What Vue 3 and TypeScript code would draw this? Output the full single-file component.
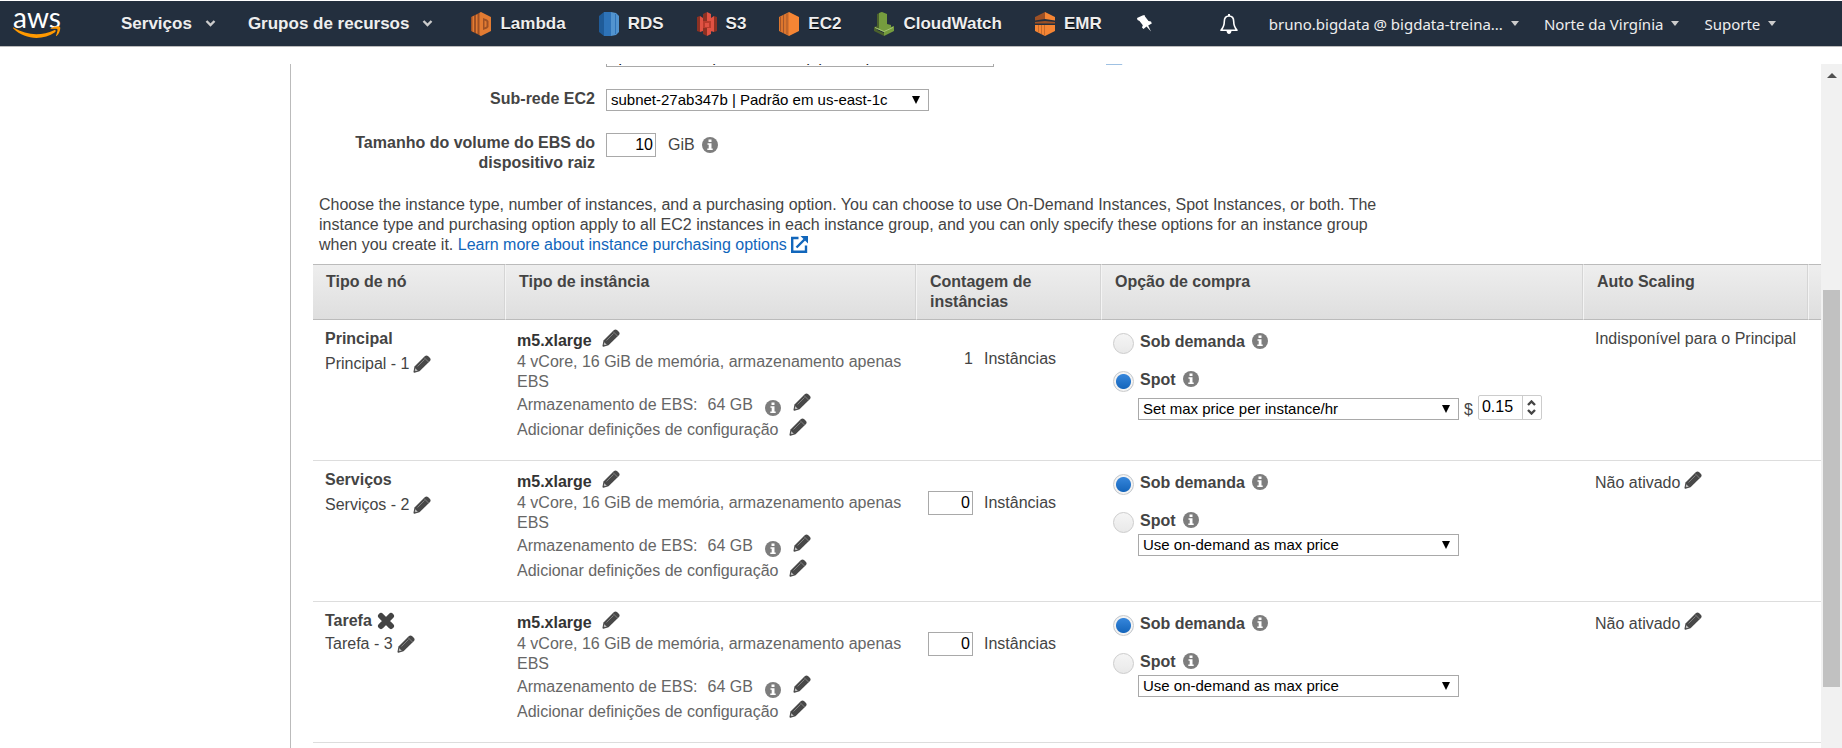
<script setup lang="ts">
import { ref } from 'vue'

interface Group {
  id: string
  name: string
  label: string
  removable: boolean
  fixedCount: boolean
  count: number
  option: 'ondemand' | 'spot'
  price: string
  scaling: string
}

const groups = ref<Group[]>([
  { id: 'master', name: 'Principal', label: 'Principal - 1', removable: false, fixedCount: true, count: 1, option: 'spot', price: 'Set max price per instance/hr', scaling: 'Indisponível para o Principal' },
  { id: 'core', name: 'Serviços', label: 'Serviços - 2', removable: false, fixedCount: false, count: 0, option: 'ondemand', price: 'Use on-demand as max price', scaling: 'Não ativado' },
  { id: 'task', name: 'Tarefa', label: 'Tarefa - 3', removable: true, fixedCount: false, count: 0, option: 'ondemand', price: 'Use on-demand as max price', scaling: 'Não ativado' },
])
const prices = ['Set max price per instance/hr', 'Use on-demand as max price']
const rootVolume = ref('10')
const maxPrice = ref('0.15')
</script>

<template>
  <div class="page">
    <svg class="defs" width="0" height="0" aria-hidden="true">
      <symbol id="pencil" viewBox="0 0 18 18">
        <path fill="#484848" d="M.5 16.500 1.500 11.500 12 1q1.500-1.200 3 0l2 2q1.200 1.500 0 3L6.500 16.300 1.500 17.700Q.3 17.800.5 16.500z" />
        <path fill="none" stroke="#888" stroke-width=".9" d="M4.500 11.500 11.500 4.500M11 2.500l4.500 4.500" />
        <path fill="#bbb" d="m2.300 13.200 2.500 2.500-2.200.6-.9-.9z" />
      </symbol>
      <symbol id="info" viewBox="0 0 16 16">
        <circle cx="8" cy="8" r="8" fill="#7d7d7d" />
        <path fill="#fff" d="M6.500 2.500h3v2.500h-3zM5.500 6.200h4v5.300h1.200V13H5.300v-1.500h1.400V7.700H5.500z" />
      </symbol>
      <symbol id="external" viewBox="0 0 17 17">
        <path fill="none" stroke="#16b" stroke-width="2.400" d="M7.500 2H1.200v13.800H15V9.500M5.500 11.500l8-8" />
        <path fill="#16b" d="M9.500 0H17v7.500z" />
      </symbol>
      <symbol id="chev" viewBox="0 0 10 7">
        <path fill="none" stroke="#ccc" stroke-width="2.400" d="m1 1 4 4 4-4" />
      </symbol>
    </svg>

    <header class="topbar">
      <a class="logo" href="#" aria-label="AWS">
        <span class="word">aws</span>
        <svg width="48" height="13" viewBox="0 0 48 13"><path fill="#f90" d="M.6 1.500C14 10 29 10 41 4.200c1.500-.6 2.500 1 1 2.100C30 14.500 12 14 .3 2.500-.2 1.900 0 1.200.6 1.500zM37.500 2.700C41 .3 46-.2 47 .9c.9 1.500-.6 6.500-3.200 8.900-.6.4-1 .1-.7-.5 1-2.500 1.800-5.300 1.200-6.100-.6-.7-4-.5-6.300-.2-.6.100-.9-.1-.5-.300z" /></svg>
      </a>
      <button class="nav services">Serviços<svg width="11" height="7"><use href="#chev" /></svg></button>
      <button class="nav groups">Grupos de recursos<svg width="11" height="7"><use href="#chev" /></svg></button>
      <nav class="shortcuts">
        <a href="#">
          <svg width="20" height="24" viewBox="0 0 20 24"><path fill="#9d5025" d="m0 5 10-5v24L0 19z" /><path fill="#e27b32" d="M1.500 4.500 3 3.700v16.600l-1.500-.8zM5 3l1.500-.8v19.600L5 21zM10 0l10 5v14l-10 5-1.500-1V1z" /><path fill="#9d5025" d="m12 6 4 1.500 1.500 1.500v6L16 16.500 12 18z" /><path fill="#e27b32" d="m13.500 8.500 2 1v5l-2 1z" /></svg>
          <span>Lambda</span>
        </a>
        <a href="#">
          <svg width="20" height="24" viewBox="0 0 20 24"><path fill="#1f5b98" d="M0 4 5 0v24l-5-4z" /><path fill="#2e73b8" d="M5 0h7v24H5z" /><path fill="#5294cf" d="m12 0 5 1 3 3v16l-3 3-5 1z" /><path stroke="#2e73b8" d="M16.500 2v20" /></svg>
          <span>RDS</span>
        </a>
        <a href="#">
          <svg width="20" height="24" viewBox="0 0 20 24"><path fill="#8c3123" d="m0 5 3-1v16l-3-1zM20 5l-3-1v16l3-1zM10 0 6 2v20l4 2z" /><path fill="#e05243" d="m10 0 4 2v20l-4 2zM3 4l3 2v13l-3 1zM17 4l-3 2v13l3 1z" /><path fill="#b83b2c" d="M6 9h8v7H6z" /><path fill="#e05243" d="M8 11h4v4H8z" /></svg>
          <span>S3</span>
        </a>
        <a href="#">
          <svg width="20" height="24" viewBox="0 0 20 24"><path fill="#dc762e" d="m0 5 10-5v24L0 19z" /><path stroke="#a5562a" d="M1.500 4.500v15M4.500 3v18M8 1.500v21" /><path fill="#f58534" d="m10 0 10 5v14l-10 5z" /></svg>
          <span>EC2</span>
        </a>
        <a href="#">
          <svg width="20" height="24" viewBox="0 0 20 24"><path fill="#4b612c" d="M3 2 8 0v16H3zM0 15l3-1v4l7 3v3L0 19z" /><path fill="#759c3e" d="m5 1 3-1 5 2v10l4 1v2l3-1v5l-10 5v-4l-7-3 2-1z" /><path fill="none" stroke="#a5c574" d="m1 15.500 9 4 9-4" /></svg>
          <span>CloudWatch</span>
        </a>
        <a href="#">
          <svg width="20" height="24" viewBox="0 0 20 24"><path fill="#9d5025" d="m10 0v7L0 8.500V5zM0 10l10-1 10 1v1.500H0z" /><path fill="#f58534" d="m10 0 10 5v3.500L10 7zM0 13h20v6l-10 5-10-5z" /><path fill="#c66a2b" d="M3 13h1v7.500H3zM6 13h1v9H6zM9 13h1v11l-1-.5z" /></svg>
          <span>EMR</span>
        </a>
      </nav>
      <button class="icon-btn" aria-label="Fixar">
        <svg width="16" height="17" viewBox="0 0 16 17"><path fill="#fff" d="M5.500.5 7.500 0l.5 1.500 3.500 4.500 2.500.5.8 2-3.600 2 2.800 6-4.500-5-3 2.500-1.500-1.500.8-2.300-3.300-4.200L.500 5 0 3z" /></svg>
      </button>
      <button class="icon-btn bell" aria-label="Alertas">
        <svg width="18" height="20" viewBox="0 0 18 20"><path fill="none" stroke="#fff" stroke-width="1.600" stroke-linejoin="round" d="M9 2C5.500 2 4.300 4.500 4.300 7.500c0 5-1.300 6.500-3.300 8.700h16c-2-2.200-3.300-3.700-3.300-8.700C13.700 4.500 12.500 2 9 2z" /><path fill="#fff" d="M8 0h2v2H8zM6.500 17h5q-.5 3-2.500 3t-2.500-3z" /></svg>
      </button>
      <button class="menu account">bruno.bigdata @ bigdata-treina...<i></i></button>
      <button class="menu">Norte da Virgínia<i></i></button>
      <button class="menu">Suporte<i></i></button>
    </header>

    <div class="body">
      <main class="panel">
        <div class="field network">
          <select class="net" aria-label="Rede"><option>vpc-16b4037e (172.31.0.0/16) (default)</option></select>
          <a href="#" class="faded" aria-label="Criar uma VPC"><svg width="17" height="17"><use href="#external" /></svg></a>
        </div>
        <div class="field subnet">
          <label for="subnet">Sub-rede EC2</label>
          <select id="subnet"><option>subnet-27ab347b | Padrão em us-east-1c</option></select>
        </div>
        <div class="field volume">
          <label for="volume">Tamanho do volume do EBS do dispositivo raiz</label>
          <div class="unit"><input id="volume" v-model="rootVolume" type="text" class="num" /><span>GiB</span><svg width="16" height="16"><use href="#info" /></svg></div>
        </div>
        <p class="intro">
          Choose the instance type, number of instances, and a purchasing option. You can choose to use On-Demand Instances, Spot Instances, or both. The instance type and purchasing option apply to all EC2 instances in each instance group, and you can only specify these options for an instance group when you create it. <a href="#">Learn more about instance purchasing options <svg width="17" height="17"><use href="#external" /></svg></a>
        </p>

        <table>
          <colgroup><col class="c1" /><col class="c2" /><col class="c3" /><col /><col class="c5" /><col class="c6" /></colgroup>
          <thead>
            <tr><th>Tipo de nó</th><th>Tipo de instância</th><th>Contagem de instâncias</th><th>Opção de compra</th><th>Auto Scaling</th><th></th></tr>
          </thead>
          <tbody>
            <tr v-for="g in groups" :key="g.id">
              <td class="node">
                <div class="title"><b>{{ g.name }}</b><button v-if="g.removable" class="bare" aria-label="Remover"><svg width="18" height="18" viewBox="0 0 18 18"><path stroke="#444" stroke-width="6" stroke-linecap="round" d="m4 4 10 10M14 4 4 14" /></svg></button></div>
                <div class="sub" :class="{ tight: g.removable }">{{ g.label }}<button class="bare" aria-label="Editar nome"><svg width="18" height="18"><use href="#pencil" /></svg></button></div>
              </td>
              <td class="type">
                <div class="line raised model"><b>m5.xlarge</b><button class="bare gap" aria-label="Editar tipo"><svg width="18" height="18"><use href="#pencil" /></svg></button></div>
                <div class="spec">4 vCore, 16 GiB de memória, armazenamento apenas EBS</div>
                <div class="line raised storage"><span>Armazenamento de EBS:</span><span class="size">64 GB</span><svg class="low" width="16" height="16"><use href="#info" /></svg><button class="bare" aria-label="Editar armazenamento"><svg width="18" height="18"><use href="#pencil" /></svg></button></div>
                <div class="line raised">Adicionar definições de configuração<button class="bare gap" aria-label="Editar configuração"><svg width="18" height="18"><use href="#pencil" /></svg></button></div>
              </td>
              <td class="count" :class="{ fixed: g.fixedCount }">
                <span v-if="g.fixedCount" class="row"><span class="fixed-num">{{ g.count }}</span><span>Instâncias</span></span>
                <label v-else class="row"><input v-model="g.count" type="text" class="num" /><span>Instâncias</span></label>
              </td>
              <td class="option">
                <div class="choice"><label><input v-model="g.option" type="radio" :name="g.id" value="ondemand" />Sob demanda</label><svg width="16" height="16"><use href="#info" /></svg></div>
                <div class="choice second"><label><input v-model="g.option" type="radio" :name="g.id" value="spot" />Spot</label><svg width="16" height="16"><use href="#info" /></svg></div>
                <div class="pricing" :class="{ custom: g.option === 'spot' }">
                  <select v-model="g.price" aria-label="Preço máximo"><option v-for="p in prices" :key="p">{{ p }}</option></select>
                  <template v-if="g.option === 'spot'">
                    <span>$</span>
                    <div class="spinner">
                      <input v-model="maxPrice" type="text" aria-label="Preço por hora" />
                      <div class="arrows"><button aria-label="Aumentar"><svg width="9" height="6" viewBox="0 0 9 6"><path fill="none" stroke="#444" stroke-width="2.400" d="m1 5 3.500-3.500L8 5" /></svg></button><button aria-label="Diminuir"><svg width="9" height="6" viewBox="0 0 9 6"><path fill="none" stroke="#444" stroke-width="2.400" d="m1 1 3.500 3.500L8 1" /></svg></button></div>
                    </div>
                  </template>
                </div>
              </td>
              <td class="scaling"><div v-if="g.fixedCount" class="plain">{{ g.scaling }}</div><div v-else class="line raised">{{ g.scaling }}<button class="bare" aria-label="Editar escala"><svg width="18" height="18"><use href="#pencil" /></svg></button></div></td>
              <td></td>
            </tr>
          </tbody>
        </table>
      </main>
      <div class="scrollbar" aria-hidden="true"><i class="up"></i><div class="thumb"></div></div>
    </div>
  </div>
</template>

<style>
body { margin: 0; overflow: hidden; }
</style>

<style scoped>
* { box-sizing: border-box; }
.page { height: 100vh; display: flex; flex-direction: column; background: #fff; color: #444; font: 16px/20px "Liberation Sans", Arial, sans-serif; overflow: hidden; }
.defs { position: absolute; }
button { border: 0; background: none; padding: 0; font: inherit; color: inherit; cursor: pointer; }
a { color: #16b; text-decoration: none; }
svg { flex: none; display: block; }

.topbar { flex: none; display: flex; align-items: center; height: 47px; border-top: 1px solid #fff; border-bottom: 1px solid #bbb; padding-left: 13px; background: #232f3e; color: #eee; text-shadow: 0 1px 0 #000; white-space: nowrap; }
.logo { display: flex; flex-direction: column; align-items: center; width: 48px; margin-right: 60px; padding-bottom: 8px; color: #fff; text-shadow: none; }
.word { font: 28px/32px Lato, sans-serif; height: 25px; }
.nav { display: flex; align-items: center; font-size: 17px; font-weight: bold; }
.nav svg { margin-left: 13px; }
.groups { margin-left: 32px; }
.shortcuts { display: flex; gap: 33px; margin-left: 38px; }
.shortcuts a { display: flex; align-items: center; gap: 9px; color: #eee; font-size: 17px; font-weight: bold; }
.icon-btn { margin-left: 35px; }
.bell { margin-left: 67px; }
.menu { font: 15px/20px "Noto Sans", "Open Sans", sans-serif; display: flex; align-items: center; margin-left: 25px; }
.menu i { border: 4px solid transparent; border-top: 5px solid #ccc; border-bottom: 0; margin-left: 8px; }
.account { margin-left: 31px; }

.body { flex: 1; min-height: 0; display: flex; margin-top: 17px; }
.panel { flex: 1; min-width: 0; margin-left: 290px; border-left: 1px solid #bbb; padding-left: 22px; overflow: hidden; }
.field { display: flex; gap: 11px; }
.field label { width: 282px; text-align: right; font-weight: bold; }
.network { height: 21px; margin-top: -18px; padding-left: 293px; gap: 112px; }
.faded { opacity: .4; padding-top: 2px; }
select { appearance: none; height: 22px; border: 1px solid #a9a9a9; border-radius: 0; padding: 0 20px 0 4px; font: 15px/18px "Liberation Sans", Arial, sans-serif; color: #000; background: #fff url("data:image/svg+xml,%3Csvg xmlns='http://www.w3.org/2000/svg' width='8' height='8'%3E%3Cpath d='M0 0h8L4 8z'/%3E%3C/svg%3E") no-repeat right 8px center; }
.net { width: 388px; height: 21px; }
.subnet { margin-top: 22px; }
#subnet { width: 323px; }
.volume { margin-top: 22px; }
.unit { display: flex; align-items: center; height: 24px; }
.num { height: 24px; border: 1px solid #a9a9a9; border-radius: 0; padding: 0 2px; font: inherit; color: #000; text-align: right; }
.unit .num { width: 50px; margin-right: 12px; }
.unit svg { margin-left: 7px; }
.intro { max-width: 1060px; margin: 22px 0 9px 6px; }
.intro svg { display: inline-block; vertical-align: -3px; }

table { width: 100%; table-layout: fixed; border-collapse: separate; border-spacing: 0; }
.c1 { width: 193px; } .c2 { width: 411px; } .c3 { width: 185px; } .c5 { width: 225px; } .c6 { width: 12px; }
th { height: 56px; text-align: left; vertical-align: top; padding: 7px 12px 7px 13px; border-top: 1px solid #bbb; border-bottom: 1px solid #bbb; border-right: 1px solid #f4f4f4; box-shadow: inset -1px 0 #d5d5d5; background: linear-gradient(#eee, #dedede); }
th:last-child { border-right: 0; box-shadow: none; padding: 0; }
td { height: 141px; vertical-align: top; padding: 9px 11px 0; border-bottom: 1px solid #ddd; }
td:last-child { padding: 0; }
.bare { flex: none; }
.bare.gap { margin-left: 10px; }
.title, .sub, .line { display: flex; align-items: center; }
.title { height: 20px; }
.title .bare { margin-left: 5px; }
.sub { height: 30px; }
.sub .bare, .scaling .bare { margin-left: 4px; }
.tight { height: 26px; }
.node { padding-left: 12px; }
.type { color: #666; padding-right: 10px; }
.type b { color: #333; }
.line { height: 25px; }
.model { height: 23px; }
.raised > .bare { padding-bottom: 6px; }
.storage .size { margin-left: 10px; }
.low { margin: 6px 12px 0 12px; }
.count { padding-top: 30px; }
.count.fixed { padding-top: 27px; }
.row { display: flex; align-items: center; height: 24px; gap: 11px; }
.count .num, .fixed-num { width: 45px; text-align: right; }
.choice { display: flex; align-items: center; gap: 7px; height: 26px; font-weight: bold; }
.choice label { display: flex; align-items: center; }
.choice svg { margin-bottom: 2px; }
.second { margin-top: 12px; }
input[type="radio"] { appearance: none; width: 21px; height: 21px; margin: 2px 6px 0 0; border: 1px solid #ccc; border-radius: 50%; background: linear-gradient(#f5f5f5, #e9e9e9); }
input[type="radio"]:checked { background: radial-gradient(circle, #fff0 7px, #f3f3f3 8px), linear-gradient(#3b8be0, #0f60b6); }
.pricing { display: flex; align-items: flex-end; gap: 5px; margin-left: 25px; height: 22px; }
.custom { height: 25px; margin-top: 2px; }
.pricing select { width: 321px; }
.spinner { display: flex; width: 64px; height: 25px; border: 1px solid #ccc; border-radius: 2px; }
.spinner input { width: 43px; border: 0; padding: 0 0 2px 3px; font: inherit; color: #000; background: none; }
.arrows { flex: 1; display: flex; flex-direction: column; justify-content: center; align-items: center; gap: 3px; border-left: 1px solid #ccc; }
.arrows button { height: 6px; display: flex; }

.scrollbar { flex: none; width: 21px; background: #f1f1f1; display: flex; flex-direction: column; align-items: center; }
.up { border: 5px solid transparent; border-bottom: 5px solid #505050; border-top: 0; margin-top: 9px; }
.thumb { width: 17px; height: 58%; margin-top: 212px; background: #c1c1c1; }
</style>
